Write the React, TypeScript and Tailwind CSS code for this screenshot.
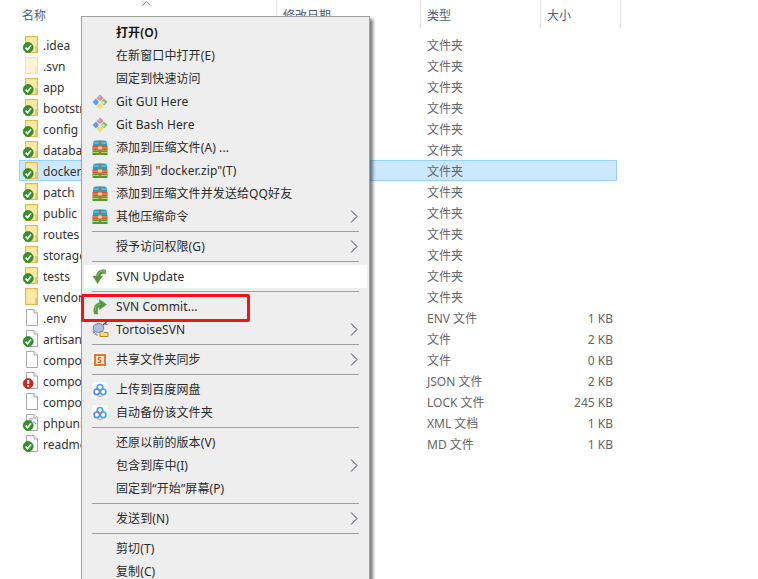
import React from "react";

type Kind = "folder" | "file" | "xml";
type Badge = "ok" | "err" | null;
type Row = { name: string; kind: Kind; badge: Badge; type: string; size?: string; pale?: boolean; selected?: boolean };

const rows: Row[] = [
  { name: ".idea", kind: "folder", badge: "ok", type: "文件夹" },
  { name: ".svn", kind: "folder", badge: null, type: "文件夹", pale: true },
  { name: "app", kind: "folder", badge: "ok", type: "文件夹" },
  { name: "bootstrap", kind: "folder", badge: "ok", type: "文件夹" },
  { name: "config", kind: "folder", badge: "ok", type: "文件夹" },
  { name: "database", kind: "folder", badge: "ok", type: "文件夹" },
  { name: "docker", kind: "folder", badge: "ok", type: "文件夹", selected: true },
  { name: "patch", kind: "folder", badge: "ok", type: "文件夹" },
  { name: "public", kind: "folder", badge: "ok", type: "文件夹" },
  { name: "routes", kind: "folder", badge: "ok", type: "文件夹" },
  { name: "storage", kind: "folder", badge: "ok", type: "文件夹" },
  { name: "tests", kind: "folder", badge: "ok", type: "文件夹" },
  { name: "vendor", kind: "folder", badge: null, type: "文件夹" },
  { name: ".env", kind: "file", badge: null, type: "ENV 文件", size: "1 KB" },
  { name: "artisan", kind: "file", badge: "ok", type: "文件", size: "2 KB" },
  { name: "compo", kind: "file", badge: null, type: "文件", size: "0 KB" },
  { name: "composer.json", kind: "file", badge: "err", type: "JSON 文件", size: "2 KB" },
  { name: "composer.lock", kind: "file", badge: null, type: "LOCK 文件", size: "245 KB" },
  { name: "phpunit.xml", kind: "xml", badge: "ok", type: "XML 文档", size: "1 KB" },
  { name: "readme.md", kind: "file", badge: "ok", type: "MD 文件", size: "1 KB" },
];

function FileIcon({ kind, badge, pale }: { kind: Kind; badge: Badge; pale?: boolean }) {
  return (
    <svg width="20" height="18" viewBox="0 0 20 18" className="shrink-0">
      {kind === "folder" ? (
        <>
          <rect x="5.5" y="0.5" width="12" height="16" fill={pale ? "#fdf1cd" : "#fbe08a"} stroke={pale ? "#f3e3b0" : "#e3b950"} />
          <rect x="7" y="2" width="9" height="13" fill={pale ? "#fef5da" : "#fde9a6"} />
          <path d="M15 10H17V16H15Z" fill={pale ? "#f8e8b8" : "#efc95f"} />
        </>
      ) : (
        <>
          <path d="M6.5 0.5H14L17.5 4V16.5H6.5Z" fill="#ffffff" stroke="#a9a9a9" />
          <path d="M14 0.5V4H17.5" fill="#f1f1f1" stroke="#a9a9a9" />
          {kind === "xml" && (
            <>
              <path d="M9 5H13M9 7H12" stroke="#7d8f9f" />
              <path d="M13 7.5L16 10" stroke="#5a8ac0" />
            </>
          )}
        </>
      )}
      {badge === "ok" && (
        <>
          <circle cx="8.2" cy="11.5" r="5" fill="#2f9524" stroke="#1f6b1c" strokeWidth="0.6" />
          <path d="M5.6 11.6L7.6 13.7L11 9.2" fill="none" stroke="#ffffff" strokeWidth="1.7" />
        </>
      )}
      {badge === "err" && (
        <>
          <circle cx="8.2" cy="11.5" r="5" fill="#d4251c" stroke="#9d1810" strokeWidth="0.6" />
          <path d="M8.2 8V12" stroke="#ffffff" strokeWidth="2" />
          <rect x="7.2" y="13" width="2" height="1.8" fill="#ffffff" />
        </>
      )}
    </svg>
  );
}

function GitIcon() {
  return (
    <svg width="16" height="16" viewBox="0 0 16 16">
      <path d="M8 0.5L11.5 4L8 7L4.5 4Z" fill="#ef7f86" />
      <path d="M5.5 3L7 1.5L9 3.5L7.5 5Z" fill="#a9c4ef" />
      <path d="M4 4.5L7 8L4 11.5L0.5 8Z" fill="#5b9cf2" />
      <path d="M12 4.5L15.5 8L12 11.5L9 8Z" fill="#7fc267" />
      <path d="M11 7L13 9L11.5 10L10 8.5Z" fill="#e6f3dc" />
      <path d="M8 9L11.5 12L8 15.5L4.5 12Z" fill="#f6dd6c" />
    </svg>
  );
}

function RarIcon() {
  return (
    <svg width="16" height="16" viewBox="0 0 16 16">
      <path d="M1 3Q1 0.5 4 0.5H12Q15 0.5 15 3V6H1Z" fill="#1f9ed8" />
      <rect x="1" y="2.5" width="14" height="1" fill="#7fd0f0" />
      <rect x="0.5" y="6" width="15" height="4.5" fill="#d9512c" />
      <rect x="0.5" y="7.5" width="15" height="1" fill="#f0a060" />
      <rect x="0.5" y="10.5" width="15" height="4.5" fill="#4aa02c" />
      <rect x="0.5" y="12" width="15" height="1" fill="#b4d860" />
      <rect x="6.8" y="0.5" width="2.4" height="14.5" fill="#a8763a" />
      <rect x="6" y="6.5" width="4" height="3" fill="#e8cf90" />
    </svg>
  );
}

function UpdateArrow() {
  return (
    <svg width="16" height="16" viewBox="0 0 16 16">
      <path d="M13.5 1C8.5 0.3 4.5 2.5 4.5 7H1L5.5 14.5L10.5 7H8.5C8.5 5 10.5 4.2 13.5 4.8Z" fill="#4f9a32" stroke="#7a8a76" strokeWidth="0.6" />
      <path d="M12.5 2.2C9.5 1.8 6 3.3 5.7 7" fill="none" stroke="#8ccf6a" strokeWidth="0.9" />
    </svg>
  );
}

function CommitArrow() {
  return (
    <svg width="16" height="16" viewBox="0 0 16 16">
      <path d="M2.5 15C0.5 9.5 3 4.5 7.5 3.7V0.5L14.5 5.5L7.5 10.5V7.7C5.5 8 5 11 5.8 15Z" fill="#4f9a32" stroke="#7a8a76" strokeWidth="0.6" />
      <path d="M3 12C2.8 8.5 5 5.3 8.8 5.1" fill="none" stroke="#8ccf6a" strokeWidth="0.9" />
    </svg>
  );
}

function TortoiseIcon() {
  return (
    <svg width="17" height="17" viewBox="0 0 17 17">
      <ellipse cx="6.5" cy="7" rx="5.3" ry="4.5" fill="#a9bfe6" stroke="#6c7f9f" />
      <circle cx="1.8" cy="11" r="1.2" fill="#8a8f98" />
      <path d="M11 4L14.5 1M13 3L15.5 3.5" stroke="#3d4a66" strokeWidth="1.2" />
      <path d="M8 10.5H11L12 11.5H16V15.5H8Z" fill="#f7dd82" stroke="#b28a2a" />
      <path d="M3 12.5L5.5 14.5" stroke="#8a8f98" strokeWidth="1.4" />
    </svg>
  );
}

function ShareIcon() {
  return (
    <div className="flex h-[15px] w-[15px] items-center justify-center bg-white">
      <div className="flex h-[12px] w-[12px] items-center justify-center border-2 border-[#e4792b] bg-[#fbe7c8] text-[8px] leading-none font-bold text-[#d9601c]">
        S
      </div>
    </div>
  );
}

function BaiduIcon() {
  return (
    <svg width="16" height="16" viewBox="0 0 16 16">
      <rect width="16" height="16" rx="3" fill="#ffffff" />
      <circle cx="8" cy="5.3" r="2.8" fill="none" stroke="#3ea0ef" strokeWidth="1.6" />
      <circle cx="4.8" cy="9.8" r="2.8" fill="none" stroke="#3f8fe8" strokeWidth="1.6" />
      <circle cx="11.2" cy="9.8" r="2.8" fill="none" stroke="#39a8e8" strokeWidth="1.6" />
      <path d="M6 8.3Q8 7.2 10 8.3" fill="none" stroke="#ee6a8a" strokeWidth="1.4" />
      <path d="M5 13.8Q8 15 11 13.8" fill="none" stroke="#f08aa8" strokeWidth="1.2" />
    </svg>
  );
}

function Chevron() {
  return (
    <svg width="8" height="13" viewBox="0 0 8 13" className="shrink-0">
      <path d="M1 0.5L7 6.5L1 12.5" fill="none" stroke="#333d58" strokeWidth="1" />
    </svg>
  );
}

function Sep() {
  return (
    <div className="h-[7px] flex items-center pl-[10px] pr-[10px]">
      <div className="h-px w-full bg-[#a0a0a0]" />
    </div>
  );
}

function Item({
  label,
  icon,
  sub,
  bold,
  white,
}: {
  label: string;
  icon?: React.ReactNode;
  sub?: boolean;
  bold?: boolean;
  white?: boolean;
}) {
  return (
    <div className={`h-[23px] mx-[2px] flex items-center ${white ? "bg-white" : ""}`}>
      <div className="w-[32px] shrink-0 flex items-center justify-start pl-[8px]">{icon}</div>
      <span className={`flex-1 tracking-[0.1px] ${bold ? "font-semibold text-[#111111]" : "text-[#2a2a2a]"}`}>{label}</span>
      {sub && (
        <span className="mr-[9px] flex">
          <Chevron />
        </span>
      )}
    </div>
  );
}

export default function App() {
  return (
    <div className="relative h-[579px] w-[758px] overflow-hidden bg-white text-[12px] leading-[16px] font-['Noto_Sans','Noto_Sans_CJK_SC',sans-serif]">
      {/* column header */}
      <div className="flex h-[34px] text-[#4c607a]">
        <div className="w-[277px] h-[28px] border-r border-[#e5e5e5] pl-[22px] pt-[8px] relative">
          名称
          <svg width="9" height="5" viewBox="0 0 9 5" className="absolute left-[142px] top-[1px]">
            <path d="M0.5 4.5L4.5 0.5L8.5 4.5" fill="none" stroke="#8a8a8a" />
          </svg>
        </div>
        <div className="w-[144px] h-[28px] border-r border-[#e5e5e5] pl-[6px] pt-[8px]">修改日期</div>
        <div className="w-[120px] h-[28px] border-r border-[#e5e5e5] pl-[6px] pt-[8px]">类型</div>
        <div className="w-[80px] h-[28px] border-r border-[#e5e5e5] pl-[6px] pt-[8px]">大小</div>
      </div>

      {/* file rows */}
      <div className="ml-[19px] w-[598px] text-[#666666]">
        {rows.map((r) => (
          <div
            key={r.name}
            className={`h-[21px] flex items-center border ${r.selected ? "bg-[#cce8ff] border-[#99d1ff]" : "border-transparent"}`}
          >
            <div className="w-[23px] shrink-0 flex">
              <FileIcon kind={r.kind} badge={r.badge} pale={r.pale} />
            </div>
            <div className="w-[384px] shrink-0 pt-[2px] text-[#333333]">{r.name}</div>
            <div className="flex-1 pt-[2px]">{r.type}</div>
            <div className="pr-[3px] pt-[2px]">{r.size}</div>
          </div>
        ))}
      </div>

      {/* context menu */}
      <div className="absolute left-[81px] top-[16px] w-[289px] border border-[#a0a0a0] bg-[#eeeeee] pt-[4px] shadow-[3px_3px_3px_rgba(0,0,0,0.5)]">
        <Item label="打开(O)" bold />
        <Item label="在新窗口中打开(E)" />
        <Item label="固定到快速访问" />
        <Item label="Git GUI Here" icon={<GitIcon />} />
        <Item label="Git Bash Here" icon={<GitIcon />} />
        <Item label="添加到压缩文件(A) ..." icon={<RarIcon />} />
        <Item label={'添加到 "docker.zip"(T)'} icon={<RarIcon />} />
        <Item label="添加到压缩文件并发送给QQ好友" icon={<RarIcon />} />
        <Item label="其他压缩命令" icon={<RarIcon />} sub />
        <Sep />
        <Item label="授予访问权限(G)" sub />
        <Sep />
        <Item label="SVN Update" icon={<UpdateArrow />} white />
        <Sep />
        <Item label="SVN Commit..." icon={<CommitArrow />} />
        <Item label="TortoiseSVN" icon={<TortoiseIcon />} sub />
        <Sep />
        <Item label="共享文件夹同步" icon={<ShareIcon />} sub />
        <Sep />
        <Item label="上传到百度网盘" icon={<BaiduIcon />} />
        <Item label="自动备份该文件夹" icon={<BaiduIcon />} />
        <Sep />
        <Item label="还原以前的版本(V)" />
        <Item label="包含到库中(I)" sub />
        <Item label="固定到“开始”屏幕(P)" />
        <Sep />
        <Item label="发送到(N)" sub />
        <Sep />
        <Item label="剪切(T)" />
        <Item label="复制(C)" />
      </div>

      {/* red annotation box */}
      <div className="absolute left-[81px] top-[294px] h-[28px] w-[169px] rounded-[2px] border-[3px] border-[#f01414]" />
    </div>
  );
}
